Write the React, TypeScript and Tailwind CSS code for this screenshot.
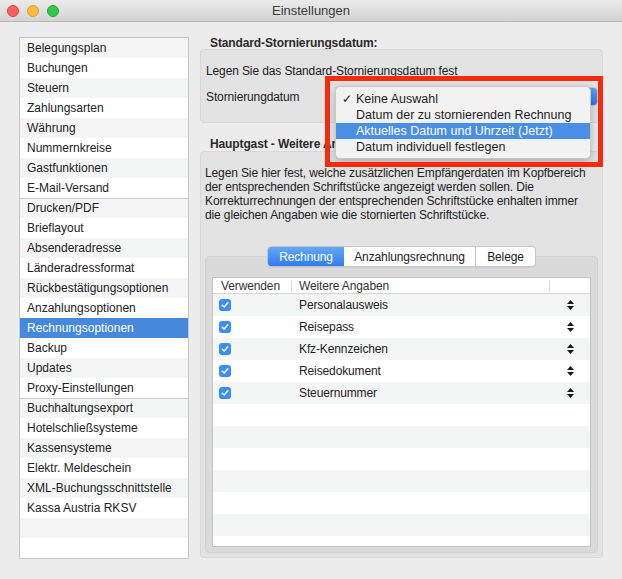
import React from "react";

const sidebarItems: { label: string; sepTop?: boolean; selected?: boolean }[] = [
  { label: "Belegungsplan" },
  { label: "Buchungen" },
  { label: "Steuern" },
  { label: "Zahlungsarten" },
  { label: "Währung" },
  { label: "Nummernkreise" },
  { label: "Gastfunktionen" },
  { label: "E-Mail-Versand" },
  { label: "Drucken/PDF", sepTop: true },
  { label: "Brieflayout" },
  { label: "Absenderadresse" },
  { label: "Länderadressformat" },
  { label: "Rückbestätigungsoptionen" },
  { label: "Anzahlungsoptionen" },
  { label: "Rechnungsoptionen", selected: true },
  { label: "Backup" },
  { label: "Updates" },
  { label: "Proxy-Einstellungen" },
  { label: "Buchhaltungsexport", sepTop: true },
  { label: "Hotelschließsysteme" },
  { label: "Kassensysteme" },
  { label: "Elektr. Meldeschein" },
  { label: "XML-Buchungsschnittstelle" },
  { label: "Kassa Austria RKSV" },
  { label: "" },
  { label: "" },
];

const tableRows = ["Personalausweis", "Reisepass", "Kfz-Kennzeichen", "Reisedokument", "Steuernummer", "", "", "", "", "", "", ""];

function SortIcon() {
  return (
    <svg width="7" height="10" viewBox="0 0 7 10">
      <path d="M3.5 0 L7 4 L0 4 Z" fill="#1a1a1a" />
      <path d="M3.5 10 L7 6 L0 6 Z" fill="#1a1a1a" />
    </svg>
  );
}

function Checkbox() {
  return (
    <div className="w-[12px] h-[12px] rounded-[3px] bg-[#3a8ef6] flex items-center justify-center">
      <svg width="8" height="8" viewBox="0 0 8 8">
        <path d="M1.3 4.2 L3.2 6 L6.8 1.8" stroke="white" strokeWidth="1.5" fill="none" strokeLinecap="round" strokeLinejoin="round" />
      </svg>
    </div>
  );
}

export default function App() {
  return (
    <div className="w-[622px] h-[579px] bg-[#ececec] relative overflow-hidden text-[12px] text-[#222] font-['Liberation_Sans',Arial,sans-serif]">
      {/* Title bar */}
      <div className="h-[22px] bg-gradient-to-b from-[#ebebeb] to-[#d4d4d4] border-b border-[#b6b6b6] flex items-center relative">
        <div className="flex items-center gap-[8px] pl-[7px]">
          <div className="w-[12px] h-[12px] rounded-full bg-[#fc605c] border border-[#e2463f]" />
          <div className="w-[12px] h-[12px] rounded-full bg-[#fdbc40] border border-[#dea034]" />
          <div className="w-[12px] h-[12px] rounded-full bg-[#34c84a] border border-[#27aa35]" />
        </div>
        <div className="absolute inset-0 flex items-center justify-center text-[13px] text-[#3a3a3a]">Einstellungen</div>
      </div>

      <div className="flex pl-[19px] pt-[15px] gap-[10px]">
        {/* Sidebar */}
        <div className="w-[170px] h-[522px] border border-[#c8c8c8] bg-white flex flex-col overflow-hidden">
          {sidebarItems.map((it, i) => (
            <div
              key={i}
              className={
                "h-[20px] shrink-0 flex items-center pl-[7px] " +
                (it.selected ? "bg-[#4689db] text-white " : i % 2 === 0 ? "bg-[#f4f5f5] " : "bg-white ") +
                (it.sepTop ? "shadow-[inset_0_1px_0_#cfcfcf]" : "")
              }
            >
              {it.label}
            </div>
          ))}
        </div>

        {/* Right column */}
        <div className="w-[404px] flex flex-col tracking-[-0.12px]">
          <div className="h-[12px] leading-[12px] pl-[11px] font-bold text-[#2a2a2a]">Standard-Stornierungsdatum:</div>
          <div className="ml-[1px] w-[403px] h-[74px] rounded-[4px] bg-[#e3e3e3] border border-[#d8d8d8] pl-[5px] pr-[4px] flex flex-col">
            <div className="h-[14px] leading-[14px] mt-[14px]">Legen Sie das Standard-Stornierungsdatum fest</div>
            <div className="flex items-center mt-[9px] h-[19px]">
              <div className="w-[129px]">Stornierungdatum</div>
              <div className="flex-1 h-[19px] bg-white rounded-[4px] border border-[#c4c4c4] flex justify-end overflow-hidden">
                <div className="w-[16px] h-full bg-gradient-to-b from-[#5aa2f7] to-[#2b79ee]" />
              </div>
            </div>
          </div>
          <div className="h-[28px] pt-[14px] leading-[14px] pl-[11px] font-bold text-[#2a2a2a]">Hauptgast - Weitere Angaben</div>
          <div className="ml-[1px] w-[403px] h-[407px] rounded-[4px] bg-[#e3e3e3] border border-[#d8d8d8] flex flex-col">
            <div className="pt-[14px] pl-[4px] leading-[14px]">
              Legen Sie hier fest, welche zusätzlichen Empfängerdaten im Kopfbereich
              <br />
              der entsprechenden Schriftstücke angezeigt werden sollen. Die
              <br />
              Korrekturrechnungen der entsprechenden Schriftstücke enhalten immer
              <br />
              die gleichen Angaben wie die stornierten Schriftstücke.
            </div>
            <div className="flex justify-center mt-[24px] relative z-10 -mb-[11px]">
              <div className="flex h-[21px] rounded-[4px] border border-[#c6c6c6] bg-white overflow-hidden shadow-[0_1px_0_rgba(0,0,0,0.05)]">
                <div className="w-[76px] flex items-center justify-center text-white bg-gradient-to-b from-[#63a8f7] to-[#2f7cef]">Rechnung</div>
                <div className="w-[132px] flex items-center justify-center border-r border-[#c6c6c6]">Anzahlungsrechnung</div>
                <div className="w-[59px] flex items-center justify-center">Belege</div>
              </div>
            </div>
            <div className="mx-[4px] h-[297px] rounded-[4px] bg-[#dadada] border border-[#d2d2d2] pt-[20px] px-[6px]">
              <div className="h-[270px] bg-white border border-[#c4c4c4] flex flex-col overflow-hidden">
                <div className="h-[16px] shrink-0 flex items-center border-b border-[#d6d6d6] text-[#333]">
                  <div className="w-[79px] pl-[8px] border-r border-[#dcdcdc] h-[12px] flex items-center">Verwenden</div>
                  <div className="w-[258px] pl-[7px] border-r border-[#dcdcdc] h-[12px] flex items-center">Weitere Angaben</div>
                </div>
                {tableRows.map((r, i) => (
                  <div key={i} className={"h-[22px] shrink-0 flex items-center " + (i % 2 === 0 ? "bg-[#f4f5f5]" : "bg-white")}>
                    {r && (
                      <>
                        <div className="w-[86px] pl-[6px]"><Checkbox /></div>
                        <div className="w-[268px]">{r}</div>
                        <div><SortIcon /></div>
                      </>
                    )}
                  </div>
                ))}
              </div>
            </div>
          </div>
        </div>
      </div>

      {/* Dropdown menu overlay */}
      <div className="absolute left-[335px] top-[86px] w-[256px] h-[73px] rounded-[5px] bg-[#f2f2f2] border border-[#c9c9c9] shadow-[0_3px_10px_rgba(0,0,0,0.25)] pt-[4px] text-[12.5px] text-[#1e1e1e]">
        <div className="h-[16px] flex items-center">
          <span className="w-[20px] pl-[6px] text-[12px]">✓</span>
          <span>Keine Auswahl</span>
        </div>
        <div className="h-[16px] flex items-center pl-[20px]">Datum der zu stornierenden Rechnung</div>
        <div className="h-[16px] flex items-center pl-[20px] bg-[#4a8ee6] text-white">Aktuelles Datum und Uhrzeit (Jetzt)</div>
        <div className="h-[16px] flex items-center pl-[20px]">Datum individuell festlegen</div>
      </div>

      {/* Red highlight box */}
      <div className="absolute left-[325px] top-[76px] w-[278px] h-[91px] border-[5px] border-[#f52a0e]" />
    </div>
  );
}
